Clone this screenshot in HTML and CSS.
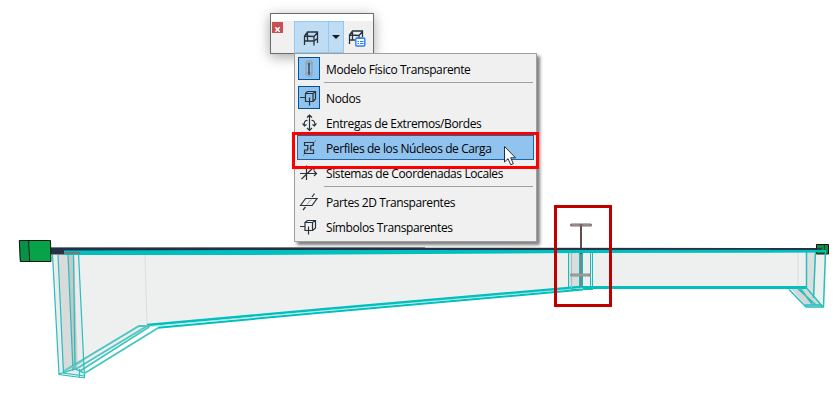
FILE: index.html
```html
<!DOCTYPE html>
<html lang="es">
<head>
    <meta charset="UTF-8">
    <meta name="viewport" content="width=device-width, initial-scale=1.0">
    <title>Modelo analítico</title>
    <link rel="stylesheet" href="styles.css">
</head>
<body>
    <main class="viewport">
        <svg class="model" width="834" height="410" viewBox="0 0 834 410">
            <!-- alma de la viga -->
            <path fill="#eef0ef" d="M78 252H826L824 306L804 288H583L150 325L83 364Z"/>
            <path fill="#ececec" d="M52 254H80L84 377L59 374Z"/>
            <path fill="#d9dbda" d="M58 254H74L78 368L63 373Z"/>
            <path fill="#c4c8c7" d="M68 254H74L77 368L73 370Z"/>
            <path fill="#dadddc" d="M568 252H580V287L568 288Z"/>
            <path fill="#dcdfde" d="M806 252H815L815 298L806 289Z"/>
            <path fill="#d3d8d7" d="M790 288H805L823 307H807Z"/>
            <path stroke="#dcdedd" fill="none" d="M145 255L147 324M798 252V287"/>
            <!-- ala superior -->
            <path fill="#243248" d="M50 247.500L828 248V251L64 251V254.500H50Z"/>
            <path stroke="#7b8088" d="M51 247.500H425" fill="none"/>
            <path fill="#00bfbd" d="M64 250.500L300 250L828 249.700V252.500L580 253L240 255L64 255Z"/>
            <path fill="#6d7d84" d="M64 252L80 252V254H64Z"/>
            <!-- ala inferior -->
            <g fill="none" stroke="#00bfbd">
                <path stroke-width="2.400" d="M147 325L320 309.500L583 286.700"/>
                <path stroke-width="2" d="M158 327.800L320 312.700L583 289.600"/>
                <path stroke="#85d6d3" stroke-width=".6" d="M147 327L320 311L583 288"/>
                <path stroke-width="3" d="M583 287.500H806"/>
                <path stroke="#4fc5c2" stroke-width="2" d="M64 371L139 326H150M76 369L147 326"/>
                <path stroke="#45c5c2" stroke-width="1.800" d="M80 371L149 327M85 373L158 328"/>
                <path stroke="#26bfbd" stroke-width="1.200" d="M52.500 255L59 374.500L84.500 378M58 255L63.500 373M68 255L73 371M73.500 254L75 369M78.500 254L84.500 378M79.500 378V369M63 373L84 376M59 374L75 369L84 373"/>
                <path stroke="#7dc8c5" d="M64 371L84 361"/>
            </g>
            <!-- apoyo intermedio -->
            <g fill="none" stroke="#12bdbb">
                <path d="M568.500 252V288M590.500 252V290M592.500 252V290M579.500 252V287M582.500 252V287M571 289.500H592"/>
                <path stroke="#8bcac7" d="M571.500 253V288"/>
            </g>
            <path stroke="#624d4e" stroke-width="2" fill="none" d="M581 226V248M581 253V270"/>
            <path stroke="#718a89" stroke-width="2" d="M581 254V287"/>
            <g stroke-linecap="round" fill="none">
                <path stroke="#78696b" stroke-width="3" d="M571.500 225H590.500"/>
                <path stroke="#b8a7a8" d="M572 225H579M583 225H590"/>
                <path stroke="#819291" stroke-width="3" d="M571.500 275H589.500"/>
                <path stroke="#afa6a7" d="M572 275H588"/>
            </g>
            <!-- extremo derecho -->
            <path fill="#079044" stroke="#111" d="M816.500 244.500H828.500V254H816.500Z"/>
            <path stroke="#233" d="M824.500 245V254"/>
            <path stroke="#243248" stroke-width="1.5" d="M770 249H822"/>
            <path stroke="#00bfbd" stroke-width="2" d="M770 251H826"/>
            <g fill="none" stroke="#24c0bd" stroke-width="1.5">
                <path d="M825.500 251L823.500 307H806L789 289.500M806.500 252V288L823 307M815.500 252L813.500 298M797 288L816 305M800 288L812 304M805 305H822"/>
            </g>
            <!-- nudo izquierdo -->
            <path fill="#069347" d="M19 240.500L29 240.500L30 261.500L20 261.500Z"/>
            <path fill="#08a348" d="M29 240.500H50.500L51 261.500H30Z"/>
            <path fill="none" stroke="#10150f" d="M19.300 240.500H50.500L51 261.500H20.300ZM28.700 240.500L29.700 261.500"/>
        </svg>

        <div class="toolbar">
            <div class="toolbar-title"></div>
            <div class="toolbar-body">
                <span class="close">
                    <svg width="11" height="11" viewBox="0 0 11 11"><path fill="none" stroke="#fff" stroke-width="1.5" d="M3.300 3.300L7.700 7.700M7.700 3.300L3.300 7.700"/></svg>
                </span>
                <span class="tool tool-active">
                    <svg class="icon" width="18" height="18" viewBox="0 0 18 18">
                        <path stroke-width="1.3" d="M1.500 17V8L4.500 4H14.500V15M1.500 8L11 8.500L14.500 4.500M11 8.500V17.500M4.500 5V13M1.500 13H11L14.500 10.500"/>
                    </svg>
                </span>
                <span class="tool-arrow"><i></i></span>
                <span class="tool-settings">
                    <svg class="icon" width="18" height="18" viewBox="0 0 18 18">
                        <path stroke-width="1.3" d="M1.500 15V6L4.500 2H14.500V8M1.500 6L11 6.500L14.500 2.500M4.500 3V11M1.500 11H7M11 6.500V9"/>
                        <rect x="7.800" y="9" width="9" height="8" rx="1" fill="#fff" stroke="#277dfa" stroke-width="1.400"/>
                        <path stroke="#277dfa" d="M8 9.500H17M9.500 12.500H11M12 12.500H15.500M9.500 14.500H11M12 14.500H15.500"/>
                    </svg>
                </span>
            </div>
        </div>

        <ul class="menu">
            <li class="item">
                <span class="item-icon checked">
                    <svg class="icon" width="20" height="20" viewBox="0 0 20 20">
                        <g stroke="#929a9d"><ellipse cx="10" cy="4.500" rx="3" ry="1.800"/><path d="M7 4.500V16.500M13 4.500V16.500"/><ellipse cx="10" cy="16.500" rx="3" ry="1.800"/></g>
                        <path stroke-width="1.300" d="M10 4.500V17"/>
                    </svg>
                </span>
                <span class="label">Modelo Físico Transparente</span>
            </li>
            <li class="separator"></li>
            <li class="item">
                <span class="item-icon checked">
                    <svg class="icon" width="20" height="20" viewBox="0 0 20 20"><path stroke-width="1.200" d="M1 10.500H6.500M6.500 6.500H14V14.500H6.500ZM6.500 6.500L8.500 4.500H16.500V12L14 14.500M14 6.500L16.500 4.500M10.500 10.500V18.500"/></svg>
                </span>
                <span class="label">Nodos</span>
            </li>
            <li class="item">
                <span class="item-icon">
                    <svg class="icon" width="20" height="20" viewBox="0 0 20 20"><path stroke-width="1.200" d="M10.500 3V18.500M8 5.500L10.500 3L13 5.500M8 16L10.500 18.500L13 16M8.500 8.500C6 8 4.500 10.500 5.500 14M12.500 8.500C15 8 16.500 10.500 15.500 14M3.500 11.500L5.500 14L7.500 12.500M17.500 11.500L15.500 14L13.500 12.500"/></svg>
                </span>
                <span class="label">Entregas de Extremos/Bordes</span>
            </li>
            <li class="item selected">
                <span class="item-icon">
                    <svg class="icon" width="20" height="20" viewBox="0 0 20 20">
                        <path stroke="#718797" d="M4 19L17 3"/>
                        <path stroke-width="1.200" d="M5.500 5.500H14.500V8.500H12L11.500 13H14.500V16.500H5.500V13H8.500L9 8.500H5.500Z"/>
                    </svg>
                </span>
                <span class="label">Perfiles de los Núcleos de Carga</span>
            </li>
            <li class="item">
                <span class="item-icon">
                    <svg class="icon" width="20" height="20" viewBox="0 0 20 20"><path stroke-width="1.200" d="M1 11.500H17.500M15 9L17.500 11.500L15 14M7.500 18V4M5.500 6L7.500 4L9.500 6M2.500 17L15 5M11.500 5H15V8.500"/></svg>
                </span>
                <span class="label">Sistemas de Coordenadas Locales</span>
            </li>
            <li class="separator"></li>
            <li class="item">
                <span class="item-icon">
                    <svg class="icon" width="20" height="20" viewBox="0 0 20 20"><path stroke-width="1.200" d="M1.500 14.500L6.500 7.500H18L13 14.500Z"/><path stroke="#929a9d" d="M8 13.500L12 8.500"/><path stroke-width="1.200" d="M4 19L6.500 16M13 6L15.500 2.500"/></svg>
                </span>
                <span class="label">Partes 2D Transparentes</span>
            </li>
            <li class="item">
                <span class="item-icon">
                    <svg class="icon" width="20" height="20" viewBox="0 0 20 20"><path stroke-width="1.200" d="M1 10.500H6M6 6.500H13.500V14.500H6ZM6 6.500L8.500 4.500H16.500V12L13.500 14.500M13.500 6.500L16.500 4.500M9.500 10.500V18.500"/></svg>
                </span>
                <span class="label">Símbolos Transparentes</span>
            </li>
        </ul>

        <div class="mark mark-menu"></div>
        <div class="mark mark-profile"></div>

        <svg class="cursor" width="14" height="21" viewBox="0 0 14 21">
            <path fill="#fff" stroke="#22303c" d="M1.500 1.500V17L5 13.700L7.800 19.800L10.300 18.700L7.700 12.800H12.500Z"/>
        </svg>
    </main>
</body>
</html>
```

FILE: styles.css
```css
body {
    margin: 0;
    background-color: #fff;
    color: #000;
    font-family: "Open Sans", "Noto Sans", sans-serif;
    font-size: 12px;
}
.viewport {
    position: relative;
    width: 834px;
    height: 410px;
    overflow: hidden;
}
.model {
    display: block;
}
.icon {
    display: block;
    fill: none;
    stroke: #26333d;
}

/* paleta flotante */
.toolbar {
    position: absolute;
    left: 270px;
    top: 13px;
    box-sizing: border-box;
    width: 104px;
    height: 41px;
    border: 1px solid #6b6b6b;
    background-color: #f0f0f0;
    box-shadow: 0 3px 12px rgba(0, 0, 0, 0.35);
}
.toolbar-title {
    height: 7px;
    background-color: #fff;
}
.toolbar-body {
    display: flex;
    height: 32px;
}
.close {
    width: 11px;
    height: 11px;
    margin: 1px 11px 0 1px;
    background-color: #c75050;
}
.tool,
.tool-arrow {
    box-sizing: border-box;
    display: flex;
    align-items: center;
    justify-content: center;
    border: 1px solid #90c8f6;
    background-color: #c0dcf3;
}
.tool {
    width: 35px;
}
.tool-arrow {
    width: 15px;
    border-left: 0;
}
.tool-arrow i {
    border: 4px solid transparent;
    border-top-color: #1b1b1b;
    border-bottom: 0;
}
.tool-settings {
    margin: 8px 0 0 4px;
}

/* menú desplegable */
.menu {
    position: absolute;
    left: 294px;
    top: 53px;
    box-sizing: border-box;
    width: 243px;
    height: 189px;
    margin: 0;
    padding: 2px;
    list-style: none;
    border: 1px solid #a0a0a0;
    background-color: #f0f0f0;
    box-shadow: 3px 3px 3px rgba(0, 0, 0, 0.5);
}
.item {
    box-sizing: border-box;
    display: flex;
    align-items: center;
    height: 25px;
    border: 1px solid transparent;
}
.item.selected {
    border-color: #1c65a5;
    background-color: #91c3ef;
}
.item-icon {
    box-sizing: border-box;
    width: 22px;
    height: 23px;
    margin-right: 6px;
    border: 1px solid transparent;
}
.item-icon.checked {
    border-color: #00529b;
    background-color: #91c3ef;
}
.label {
    padding-top: 2px;
    line-height: 21px;
    letter-spacing: -0.4px;
    white-space: nowrap;
}
.separator {
    height: 4px;
    margin: 0 1px 0 27px;
    background: linear-gradient(#a0a0a0, #a0a0a0) 0 1px / 100% 1px no-repeat;
}

/* marcas */
.mark {
    position: absolute;
    box-sizing: border-box;
    border: 3px solid #f00;
}
.mark-menu {
    left: 292px;
    top: 132px;
    width: 247px;
    height: 37px;
}
.mark-profile {
    left: 554px;
    top: 205px;
    width: 58px;
    height: 102px;
    border-color: #c00000;
}
.cursor {
    position: absolute;
    left: 503px;
    top: 145px;
}
```
